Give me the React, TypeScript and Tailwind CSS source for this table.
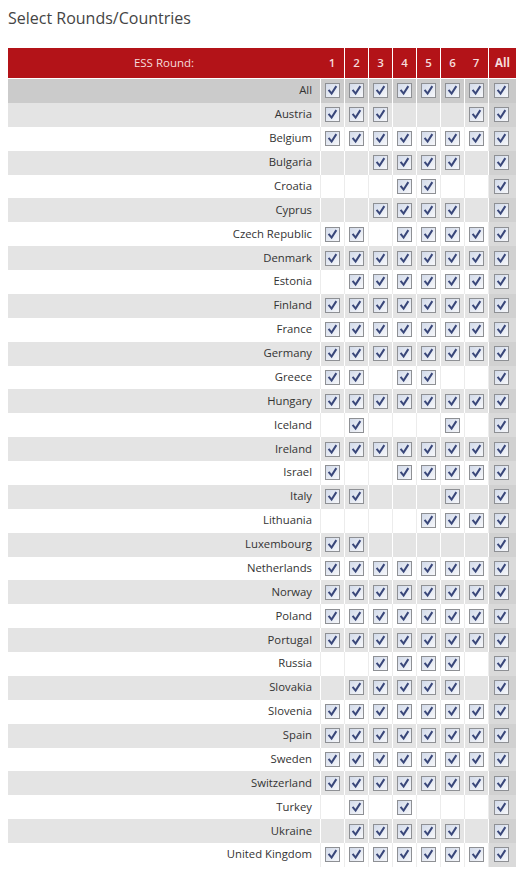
import React from 'react';

const rounds = [1, 2, 3, 4, 5, 6, 7];
const every = [1, 2, 3, 4, 5, 6, 7];

const countries: [string, number[]][] = [
  ['All', every],
  ['Austria', [1, 2, 3, 7]],
  ['Belgium', every],
  ['Bulgaria', [3, 4, 5, 6]],
  ['Croatia', [4, 5]],
  ['Cyprus', [3, 4, 5, 6]],
  ['Czech Republic', [1, 2, 4, 5, 6, 7]],
  ['Denmark', every],
  ['Estonia', [2, 3, 4, 5, 6, 7]],
  ['Finland', every],
  ['France', every],
  ['Germany', every],
  ['Greece', [1, 2, 4, 5]],
  ['Hungary', every],
  ['Iceland', [2, 6]],
  ['Ireland', every],
  ['Israel', [1, 4, 5, 6, 7]],
  ['Italy', [1, 2, 6]],
  ['Lithuania', [5, 6, 7]],
  ['Luxembourg', [1, 2]],
  ['Netherlands', every],
  ['Norway', every],
  ['Poland', every],
  ['Portugal', every],
  ['Russia', [3, 4, 5, 6]],
  ['Slovakia', [2, 3, 4, 5, 6]],
  ['Slovenia', every],
  ['Spain', every],
  ['Sweden', every],
  ['Switzerland', every],
  ['Turkey', [2, 4]],
  ['Ukraine', [2, 3, 4, 5, 6]],
  ['United Kingdom', every],
];

const Box = () => (
  <span className="flex h-[15px] w-[15px] items-center justify-center border border-[#8e9094] bg-linear-to-br from-[#d3dbea] to-[#f6f7fa]">
    <svg viewBox="0 0 13 13" className="h-[13px] w-[13px]">
      <path d="M3.2 6.6 L5.6 9.6 L9.8 3" fill="none" stroke="#39477a" strokeWidth="2" strokeLinecap="square" />
    </svg>
  </span>
);

const App = () => {
  return (
    <div className="min-h-screen bg-white px-2 pt-2 font-['Open_Sans',sans-serif] text-[#333]">
      <h1 className="mb-5 text-[16px] leading-5 text-[#444]">Select Rounds/Countries</h1>

      <div className="w-[508px]">
        <div className="flex h-[31px] border-b border-white bg-[#b31318] text-[11.5px] text-[#f6dcdc]">
          <div className="flex w-[312px] items-center justify-center">ESS Round:</div>
          {rounds.map((r) => (
            <div
              key={r}
              className={`flex w-[24px] items-center justify-center font-semibold ${
                r === 1 || r === 7 ? '' : 'border-l border-white'
              }`}
            >
              {r}
            </div>
          ))}
          <div className="flex w-[28px] items-center justify-center border-l border-white font-bold">All</div>
        </div>

        {countries.map(([name, checked], i) => {
          const first = i === 0;
          const grey = i % 2 === 1;
          const rowBg = first ? 'bg-[#cbcbcb]' : grey ? 'bg-[#e4e4e4]' : 'bg-white';
          const line = first || grey ? 'border-white' : 'border-[#ececec]';
          const allBg = first ? 'bg-[#c9c9c9]' : grey ? 'bg-[#d1d1d1]' : 'bg-[#dadada]';
          return (
            <div key={name} className={`flex h-[23.875px] ${rowBg} text-[11.3px]`}>
              <div className="flex w-[312px] items-center justify-end pr-2 text-[#333]">{name}</div>
              {rounds.map((r) => (
                <div key={r} className={`flex w-[24px] items-center justify-center border-l ${line}`}>
                  {checked.includes(r) && <Box />}
                </div>
              ))}
              <div className={`flex w-[28px] items-center border-l pl-[5px] ${line} ${allBg}`}>
                <Box />
              </div>
            </div>
          );
        })}
      </div>
    </div>
  );
};

export default App;
